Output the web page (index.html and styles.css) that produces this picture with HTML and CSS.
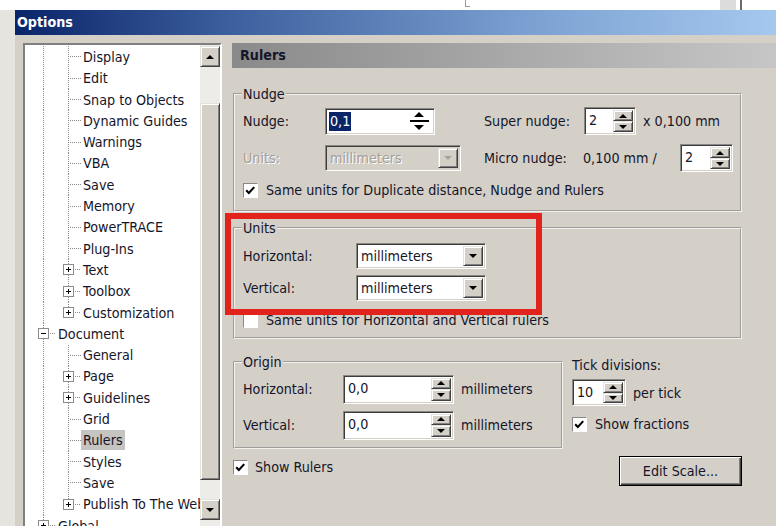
FILE: index.html
```html
<!DOCTYPE html>
<html lang="en">
<head>
<meta charset="utf-8">
<title>Options</title>
<link rel="stylesheet" href="styles.css">
</head>
<body>
<div class="topstrip"><span class="mark1"></span><span class="mark2"></span><span class="mark3"></span></div>
<div class="window">
  <div class="titlebar">Options</div>
  <div class="client">
    <div class="tree">
      <div class="tree-list">
        <div class="row"><span class="c v"></span><span class="c b"></span><span class="lbl">Display</span></div>
        <div class="row"><span class="c v"></span><span class="c b"></span><span class="lbl">Edit</span></div>
        <div class="row"><span class="c v"></span><span class="c b"></span><span class="lbl">Snap to Objects</span></div>
        <div class="row"><span class="c v"></span><span class="c b"></span><span class="lbl">Dynamic Guides</span></div>
        <div class="row"><span class="c v"></span><span class="c b"></span><span class="lbl">Warnings</span></div>
        <div class="row"><span class="c v"></span><span class="c b"></span><span class="lbl">VBA</span></div>
        <div class="row"><span class="c v"></span><span class="c b"></span><span class="lbl">Save</span></div>
        <div class="row"><span class="c v"></span><span class="c b"></span><span class="lbl">Memory</span></div>
        <div class="row"><span class="c v"></span><span class="c b"></span><span class="lbl">PowerTRACE</span></div>
        <div class="row"><span class="c v"></span><span class="c b"></span><span class="lbl">Plug-Ins</span></div>
        <div class="row"><span class="c v"></span><span class="c bx"><span class="pm plus"></span></span><span class="lbl">Text</span></div>
        <div class="row"><span class="c v"></span><span class="c bx"><span class="pm plus"></span></span><span class="lbl">Toolbox</span></div>
        <div class="row"><span class="c v"></span><span class="c bxl"><span class="pm plus"></span></span><span class="lbl">Customization</span></div>
        <div class="row"><span class="c bx"><span class="pm minus"></span></span><span class="lbl">Document</span></div>
        <div class="row"><span class="c v"></span><span class="c b"></span><span class="lbl">General</span></div>
        <div class="row"><span class="c v"></span><span class="c bx"><span class="pm plus"></span></span><span class="lbl">Page</span></div>
        <div class="row"><span class="c v"></span><span class="c bx"><span class="pm plus"></span></span><span class="lbl">Guidelines</span></div>
        <div class="row"><span class="c v"></span><span class="c b"></span><span class="lbl">Grid</span></div>
        <div class="row"><span class="c v"></span><span class="c b"></span><span class="lbl sel">Rulers</span></div>
        <div class="row"><span class="c v"></span><span class="c b"></span><span class="lbl">Styles</span></div>
        <div class="row"><span class="c v"></span><span class="c b"></span><span class="lbl">Save</span></div>
        <div class="row"><span class="c v"></span><span class="c bxl"><span class="pm plus"></span></span><span class="lbl">Publish To The Web</span></div>
        <div class="row"><span class="c bxl"><span class="pm plus"></span></span><span class="lbl">Global</span></div>
      </div>
      <div class="vscroll">
        <div class="sbtn"><i class="tri-up"></i></div>
        <div class="strack t1"></div>
        <div class="sthumb"></div>
        <div class="strack t2"></div>
        <div class="sbtn"><i class="tri-down"></i></div>
        <div class="strack t3"></div>
      </div>
    </div>

    <div class="page">
      <div class="page-header">Rulers</div>

      <fieldset class="group g-wide g-nudge">
        <legend>Nudge</legend>
        <div class="rows gap7">
          <div class="frow h30">
            <span class="flabel w82">Nudge:</span>
            <div class="spin w110">
              <span class="spin-val"><span class="hl">0,1</span></span>
              <span class="spin-flat"><i class="tri-up big"></i><i class="bar"></i><i class="tri-down big"></i></span>
            </div>
            <span class="flabel w100 ml49">Super nudge:</span>
            <div class="spin w52 h28">
              <span class="spin-val">2</span>
              <span class="spin-btns"><span class="sbtn2"><i class="tri-up"></i></span><span class="sbtn2"><i class="tri-down"></i></span></span>
            </div>
            <span class="after">x 0,100 mm</span>
          </div>
          <div class="frow h30">
            <span class="flabel w82 disabled">Units:</span>
            <div class="combo w136 disabled">
              <span class="combo-val">millimeters</span>
              <span class="combo-btn"><i class="tri-down"></i></span>
            </div>
            <span class="flabel w99 ml23">Micro nudge:</span>
            <span class="flabel w97">0,100 mm /</span>
            <div class="spin w53 h28">
              <span class="spin-val">2</span>
              <span class="spin-btns"><span class="sbtn2"><i class="tri-up"></i></span><span class="sbtn2"><i class="tri-down"></i></span></span>
            </div>
          </div>
          <div class="frow h20">
            <span class="check"><span class="cbox"><svg viewBox="0 0 15 15" width="13" height="13"><path d="M2.5 7.2 L5.6 10.3 L11.8 3.6" fill="none" stroke="#000" stroke-width="2.4"/></svg></span>Same units for Duplicate distance, Nudge and Rulers</span>
          </div>
        </div>
      </fieldset>

      <fieldset class="group g-wide g-units">
        <legend>Units</legend>
        <div class="rows">
          <div class="frow h28">
            <span class="flabel w113">Horizontal:</span>
            <div class="combo w130">
              <span class="combo-val">millimeters</span>
              <span class="combo-btn"><i class="tri-down"></i></span>
            </div>
          </div>
          <div class="frow h28 mt4">
            <span class="flabel w113">Vertical:</span>
            <div class="combo w130">
              <span class="combo-val">millimeters</span>
              <span class="combo-btn"><i class="tri-down"></i></span>
            </div>
          </div>
          <div class="frow h20 mt8">
            <span class="check"><span class="cbox"></span>Same units for Horizontal and Vertical rulers</span>
          </div>
        </div>
      </fieldset>

      <div class="lower">
        <fieldset class="group g-origin">
          <legend>Origin</legend>
          <div class="rows gap6">
            <div class="frow h30">
              <span class="flabel w100">Horizontal:</span>
              <div class="spin w111 h29">
                <span class="spin-val">0,0</span>
                <span class="spin-btns"><span class="sbtn2"><i class="tri-up"></i></span><span class="sbtn2"><i class="tri-down"></i></span></span>
              </div>
              <span class="after ml9">millimeters</span>
            </div>
            <div class="frow h30">
              <span class="flabel w100">Vertical:</span>
              <div class="spin w111 h29">
                <span class="spin-val">0,0</span>
                <span class="spin-btns"><span class="sbtn2"><i class="tri-up"></i></span><span class="sbtn2"><i class="tri-down"></i></span></span>
              </div>
              <span class="after ml9">millimeters</span>
            </div>
          </div>
        </fieldset>
        <div class="tick">
          <div class="tick-label">Tick divisions:</div>
          <div class="frow h27">
            <div class="spin w54 h27">
              <span class="spin-val">10</span>
              <span class="spin-btns"><span class="sbtn2"><i class="tri-up"></i></span><span class="sbtn2"><i class="tri-down"></i></span></span>
            </div>
            <span class="after ml8">per tick</span>
          </div>
          <div class="frow h20 mt8">
            <span class="check"><span class="cbox"><svg viewBox="0 0 15 15" width="13" height="13"><path d="M2.5 7.2 L5.6 10.3 L11.8 3.6" fill="none" stroke="#000" stroke-width="2.4"/></svg></span>Show fractions</span>
          </div>
        </div>
      </div>

      <div class="bottom">
        <span class="check show-rulers"><span class="cbox"><svg viewBox="0 0 15 15" width="13" height="13"><path d="M2.5 7.2 L5.6 10.3 L11.8 3.6" fill="none" stroke="#000" stroke-width="2.4"/></svg></span>Show Rulers</span>
        <button class="btn" type="button">Edit Scale...</button>
      </div>

      <div class="callout"></div>
    </div>
  </div>
</div>
</body>
</html>
```

FILE: styles.css
```css
* { box-sizing: border-box; }
html, body { margin: 0; padding: 0; }
body {
  width: 776px;
  height: 526px;
  overflow: hidden;
  background: #e6e4df;
  font-family: "DejaVu Sans Condensed", "DejaVu Sans", sans-serif;
  font-size: 14.2px;
  color: #15152a;
}

/* strip of the window behind */
.topstrip { height: 10px; background: #fff; display: flex; align-items: flex-start; }
.mark1 { margin-left: 465px; width: 5px; height: 7px; border-left: 1px solid #9a9a9a; border-bottom: 1px solid #9a9a9a; }
.mark2 { margin-left: 250px; width: 16px; height: 10px; background: #dcdcdc; }
.mark3 { margin-left: 4px; width: 2px; height: 10px; background: #6a6a6a; }

.window {
  margin-left: 15px;
  height: 516px;
  background: #d4d0c8;
  overflow: hidden;
}
.titlebar {
  height: 25px;
  line-height: 25px;
  padding-left: 2px;
  color: #fff;
  font-weight: bold;
  background: linear-gradient(90deg, #0a246a 0%, #3f63a0 30%, #7fa4d4 70%, #a4c8ee 100%);
}
.client {
  display: flex;
  padding: 8px 0 0 8px;
  height: 491px;
  overflow: hidden;
}

/* tree view */
.tree {
  flex: none;
  width: 199px;
  height: 500px;
  display: flex;
  background: #fff;
  border: 2px solid;
  border-color: #808080 #ffffff #ffffff #808080;
}
.tree-list {
  width: 175px;
  flex: none;
  overflow: hidden;
  padding: 1.35px 0 0 6px;
  --vf: repeating-linear-gradient(180deg, #8a8a8a 0 1px, transparent 1px 2px) 12px 0 / 1px 100% no-repeat;
  --vt: repeating-linear-gradient(180deg, #8a8a8a 0 1px, transparent 1px 2px) 12px 0 / 1px 50% no-repeat;
  --h: repeating-linear-gradient(90deg, #8a8a8a 0 1px, transparent 1px 2px) 14px 50% / 11px 1px no-repeat;
  --hb: repeating-linear-gradient(90deg, #8a8a8a 0 1px, transparent 1px 2px) 19px 50% / 6px 1px no-repeat;
}
.row {
  display: flex;
  height: 21.3px;
  white-space: nowrap;
}
.c { flex: none; width: 25px; height: 100%; display: flex; align-items: center; }
.c.v { background: var(--vf); }
.c.b { background: var(--h), var(--vf); }
.c.bx { background: var(--hb), var(--vf); }
.c.bxl { background: var(--hb), var(--vt); }
.pm {
  width: 11px;
  height: 11px;
  margin-left: 7px;
  border: 1px solid #8c8c8c;
  background-color: #fff;
}
.pm.plus {
  background:
    linear-gradient(#000, #000) 2px 4px / 5px 1px no-repeat,
    linear-gradient(#000, #000) 4px 2px / 1px 5px no-repeat,
    #fff;
}
.pm.minus {
  background: linear-gradient(#000, #000) 2px 4px / 5px 1px no-repeat, #fff;
}
.lbl {
  align-self: center;
  height: 20px;
  line-height: 20px;
  padding: 0 2px;
}
.lbl.sel { background: #c6c4c0; }

/* scrollbar */
.vscroll {
  flex: none;
  width: 20px;
  display: flex;
  flex-direction: column;
  padding-top: 1px;
  background: #eceae6;
}
.sbtn, .sthumb, .sbtn2, .combo-btn {
  background: #d4d0c8;
  border: 1px solid;
  border-color: #e4e2dd #404040 #404040 #e4e2dd;
  box-shadow: inset 1px 1px 0 #ffffff, inset -1px -1px 0 #808080;
}
.sbtn { height: 21px; display: flex; align-items: center; justify-content: center; flex: none; }
.strack { background: #eeece8; flex: none; }
.strack.t1 { height: 36px; }
.sthumb { height: 377px; flex: none; }
.strack.t2 { height: 19px; }
.strack.t3 { flex: 1; }

.tri-up, .tri-down {
  display: block;
  width: 0;
  height: 0;
  border-left: 4px solid transparent;
  border-right: 4px solid transparent;
}
.tri-up { border-bottom: 4px solid #000; }
.tri-down { border-top: 4px solid #000; }
.tri-up.big { border-left-width: 5px; border-right-width: 5px; border-bottom-width: 5px; }
.tri-down.big { border-left-width: 5px; border-right-width: 5px; border-top-width: 5px; }

/* right page */
.page {
  position: relative;
  flex: none;
  width: 544px;
  margin-left: 10px;
  display: flex;
  flex-direction: column;
  align-items: flex-start;
}
.page-header {
  align-self: stretch;
  height: 25px;
  line-height: 25px;
  padding-left: 8px;
  font-weight: bold;
  background: linear-gradient(90deg, #8a8a8a 0%, #a8a8a8 50%, #c6c6c6 100%);
}

.group {
  margin: 0 0 0 1px;
  padding: 4px 7px 10px;
  border: 2px groove #f2f1ee;
  min-width: 0;
}
.group legend {
  padding: 0 1px;
  line-height: 16px;
  height: 16px;
}
.g-wide { width: 509px; }
.g-nudge { margin-top: 18px; }
.g-units { margin-top: 8px; padding-top: 6px; padding-bottom: 7px; }
.g-origin { width: 330px; padding-bottom: 7px; }

.rows { display: flex; flex-direction: column; padding-left: 1px; }
.gap7 { gap: 7px; }
.gap6 { gap: 6px; }
.mt4 { margin-top: 4px; }
.mt8 { margin-top: 8px; }
.frow { display: flex; align-items: center; white-space: nowrap; }
.h20 { height: 20px; }
.h27 { height: 27px; }
.h28 { height: 28px; }
.h30 { height: 30px; }

.flabel { flex: none; }
.flabel.disabled { color: #a3a19c; text-shadow: 1px 1px 0 #fff; }
.w82 { width: 82px; }
.w97 { width: 97px; }
.w99 { width: 99px; }
.w100 { width: 100px; }
.w113 { width: 113px; }
.ml49 { margin-left: 49px; }
.ml23 { margin-left: 23px; }
.ml9 { margin-left: 9px; }
.ml8 { margin-left: 8px; }
.after { margin-left: 7px; }

/* spin boxes */
.spin {
  flex: none;
  display: flex;
  height: 27px;
  background: #fff;
  border: 1px solid;
  border-color: #8a8884 #ffffff #ffffff #8a8884;
  box-shadow: inset 1px 1px 0 #3c3c3c, inset -1px -1px 0 #d4d0c8;
}
.spin.h28 { height: 28px; }
.spin.h29 { height: 29px; }
.spin.h27 { height: 27px; }
.w52 { width: 52px; }
.w53 { width: 53px; }
.w54 { width: 54px; }
.w110 { width: 110px; }
.w111 { width: 111px; }
.spin-val {
  flex: 1;
  padding: 2px 0 0 4px;
  line-height: 20px;
}
.hl { background: #0a246a; color: #fff; padding: 0 1px; margin-left: -1px; display: inline-block; line-height: 19px; }
.spin-flat {
  width: 26px;
  margin: 2px 2px 2px 0;
  display: flex;
  flex-direction: column;
  align-items: center;
  justify-content: center;
  gap: 3px;
}
.spin-flat .bar { display: block; width: 19px; height: 2px; background: #000; }
.spin-btns {
  width: 20px;
  margin: 2px 2px 2px 0;
  display: flex;
  flex-direction: column;
}
.sbtn2 { flex: 1; display: flex; align-items: center; justify-content: center; }

/* combo boxes */
.combo {
  flex: none;
  display: flex;
  height: 26px;
  background: #fff;
  border: 1px solid;
  border-color: #8a8884 #ffffff #ffffff #8a8884;
  box-shadow: inset 1px 1px 0 #3c3c3c, inset -1px -1px 0 #d4d0c8;
}
.w130 { width: 130px; }
.w136 { width: 136px; }
.combo-val { flex: 1; padding-left: 4px; line-height: 24px; }
.combo-btn {
  width: 20px;
  margin: 2px 2px 2px 0;
  display: flex;
  align-items: center;
  justify-content: center;
}
.combo.disabled { background: #d4d0c8; color: #a3a19c; }
.combo.disabled .combo-val { text-shadow: 1px 1px 0 #fff; }
.combo.disabled .tri-down { border-top-color: #a3a19c; }

/* checkboxes */
.check { display: flex; align-items: center; gap: 8px; }
.cbox {
  flex: none;
  width: 15px;
  height: 15px;
  background: #fff;
  border: 1px solid;
  border-color: #8a8884 #ffffff #ffffff #8a8884;
  display: flex;
  align-items: center;
  justify-content: center;
}

/* origin + tick */
.lower { display: flex; align-items: flex-start; margin-top: 15px; }
.tick { margin-left: 9px; margin-top: 3px; display: flex; flex-direction: column; }
.tick-label { height: 16px; line-height: 16px; margin-bottom: 6px; }

.bottom {
  display: flex;
  align-items: flex-start;
  width: 509px;
  margin: 7px 0 0 1px;
}
.show-rulers { height: 22px; gap: 7px; }
.btn {
  margin-left: auto;
  width: 123px;
  height: 30px;
  font: inherit;
  color: inherit;
  background: #d4d0c8;
  border: 1px solid #000;
  box-shadow: inset 1px 1px 0 #ffffff, inset -1px -1px 0 #404040, inset -2px -2px 0 #808080;
  padding: 0;
}

/* red annotation frame */
.callout {
  position: absolute;
  left: -7px;
  top: 170px;
  width: 317px;
  height: 102px;
  border: 6px solid #e2231c;
}
```
